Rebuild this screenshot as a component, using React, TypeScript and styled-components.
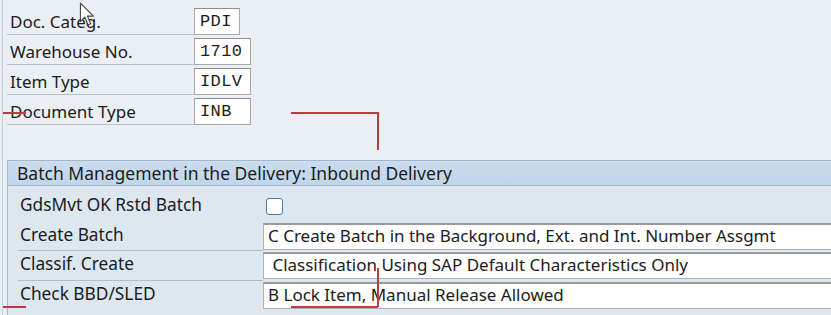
import React from "react";
import styled, { createGlobalStyle } from "styled-components";

const GlobalStyle = createGlobalStyle`
  html, body {
    margin: 0;
    padding: 0;
    overflow: hidden;
    background: #e9eff5;
  }
  body {
    font-family: "Noto Sans", "Open Sans", sans-serif;
    color: #1c1c1c;
  }
`;

const Screen = styled.div`
  position: relative;
  width: 831px;
  height: 315px;
  overflow: hidden;
  background: #e9eff5;
  border-left: 1px solid #c4ccd4;
  margin-left: 2px;
  box-sizing: border-box;
`;

const HeaderForm = styled.div`
  display: flex;
  flex-direction: column;
  gap: 2px;
  padding: 8px 0 0 4px;
`;

const FieldRow = styled.div`
  display: flex;
  align-items: flex-start;
  height: 28px;
`;

const HeaderLabel = styled.div`
  width: 187px;
  height: 27px;
  border-bottom: 1px solid #b9c0c8;
  padding-left: 3px;
  box-sizing: border-box;
  font-size: 17px;
  line-height: 27px;
  white-space: nowrap;
`;

const CodeBox = styled.div<{ $w: number }>`
  width: ${({ $w }) => $w}px;
  height: 27px;
  box-sizing: border-box;
  background: #fff;
  border: 1px solid #a9a9a9;
  border-top-color: #8e8e8e;
  padding-left: 5px;
  font-family: "Liberation Mono", "Courier New", monospace;
  font-size: 17px;
  line-height: 25px;
  letter-spacing: 0.4px;
`;

const Panel = styled.section`
  margin: 34px 0 0 4px;
  width: 860px;
  border: 1px solid #a3b8cd;
  background: #dde7f0;
`;

const PanelTitle = styled.div`
  height: 24px;
  background: linear-gradient(#cadcee, #c1d6eb);
  border-bottom: 1px solid #a3b8cd;
  padding-left: 9px;
  font-size: 17.5px;
  line-height: 24px;
  white-space: nowrap;
`;

const PanelBody = styled.div`
  display: flex;
  flex-direction: column;
  padding: 6px 0 6px 10px;
`;

const PanelRow = styled.div`
  display: flex;
  align-items: stretch;
  height: 29.5px;
`;

const PanelLabel = styled.div<{ $underline?: boolean }>`
  width: 245px;
  flex: none;
  box-sizing: border-box;
  padding-left: 2px;
  border-bottom: 1px solid ${({ $underline }) => ($underline ? "#b4bcc5" : "transparent")};
  font-size: 17.3px;
  line-height: 26px;
  white-space: nowrap;
`;

const ValueBox = styled.div`
  flex: 1;
  height: 27px;
  margin-top: 1px;
  box-sizing: border-box;
  background: #fff;
  border: 1px solid #b0b0b0;
  border-top: 2px solid #9a9a9a;
  padding-left: 4px;
  font-size: 17px;
  line-height: 22px;
  white-space: pre;
`;

const CheckCell = styled.div`
  display: flex;
  align-items: center;
  padding-left: 3px;
`;

const Check = styled.span`
  width: 17px;
  height: 17px;
  box-sizing: border-box;
  border: 1.5px solid #56779b;
  border-radius: 3px;
  background: #fff;
`;

const Mark = styled.div`
  position: absolute;
  background: #c23a3f;
`;

const Cursor = styled.svg`
  position: absolute;
  left: 76px;
  top: 2px;
`;

const headerFields = [
  { label: "Doc. Categ.", value: "PDI", w: 46 },
  { label: "Warehouse No.", value: "1710", w: 57 },
  { label: "Item Type", value: "IDLV", w: 57 },
  { label: "Document Type", value: "INB", w: 57 },
];

const batchFields = [
  { label: "Create Batch", value: "C Create Batch in the Background, Ext. and Int. Number Assgmt", underline: true },
  { label: "Classif. Create", value: " Classification Using SAP Default Characteristics Only", underline: true },
  { label: "Check BBD/SLED", value: "B Lock Item, Manual Release Allowed", underline: false },
];

export default function App() {
  return (
    <Screen>
      <GlobalStyle />
      <HeaderForm>
        {headerFields.map((f) => (
          <FieldRow key={f.label}>
            <HeaderLabel>{f.label}</HeaderLabel>
            <CodeBox $w={f.w}>{f.value}</CodeBox>
          </FieldRow>
        ))}
      </HeaderForm>

      <Panel>
        <PanelTitle>Batch Management in the Delivery: Inbound Delivery</PanelTitle>
        <PanelBody>
          <PanelRow>
            <PanelLabel>GdsMvt OK Rstd Batch</PanelLabel>
            <CheckCell>
              <Check />
            </CheckCell>
          </PanelRow>
          {batchFields.map((f) => (
            <PanelRow key={f.label}>
              <PanelLabel $underline={f.underline}>{f.label}</PanelLabel>
              <ValueBox>{f.value}</ValueBox>
            </PanelRow>
          ))}
        </PanelBody>
      </Panel>

      {/* red annotation strokes drawn over the screenshot */}
      <Mark style={{ left: -2, top: 112, width: 25, height: 1.5 }} />
      <Mark style={{ left: 288, top: 112, width: 87, height: 1.5 }} />
      <Mark style={{ left: 374, top: 112, width: 1.5, height: 38 }} />
      <Mark style={{ left: 374, top: 268, width: 1.5, height: 39 }} />
      <Mark style={{ left: 288, top: 306, width: 87, height: 1.5 }} />
      <Mark style={{ left: -2, top: 306, width: 25, height: 1.5 }} />

      <Cursor width="18" height="26" viewBox="0 0 16 24">
        <path d="M1 1 L1 18 L5 14 L8 21 L10.5 20 L7.5 13 L13 13 Z" fill="#fff" stroke="#444" strokeWidth="1" strokeLinejoin="round" />
      </Cursor>
    </Screen>
  );
}
